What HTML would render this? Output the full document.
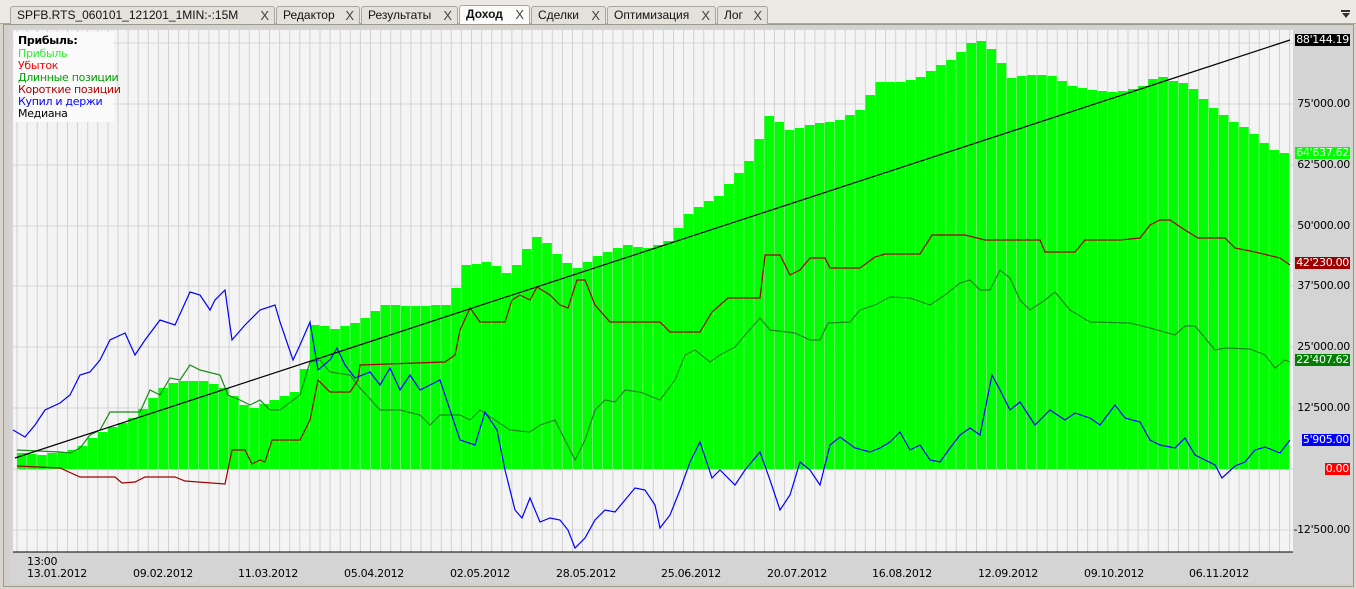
<!DOCTYPE html>
<html><head><meta charset="utf-8"><style>
*{margin:0;padding:0;box-sizing:border-box}
body{width:1356px;height:589px;overflow:hidden;background:#d8d5cf;font-family:"Liberation Sans","DejaVu Sans",sans-serif;position:relative}
.tabs{position:absolute;left:0;top:0;width:1356px;height:24px;background:#ece9e4;border-bottom:1px solid #a9a69f}
.tab{position:absolute;top:6px;height:18px;border:1px solid #a9a69f;border-bottom:none;background:#e4e1db;font-size:12px;line-height:17px;padding-left:6px;color:#111;border-radius:3px 3px 0 0}
.tab b{font-weight:bold}
.tab .x{position:absolute;right:5px;top:0;color:#444;font-size:13px}
.pane{position:absolute;left:3px;top:24px;width:1351px;height:563px;border:1px solid #9c998f;background:#d4d1ca}
svg{position:absolute;left:0;top:0}
.lbl{position:absolute;font-size:11px;font-family:"DejaVu Sans","Liberation Sans",sans-serif;letter-spacing:-0.3px;line-height:12px}
</style></head><body>
<div class="tabs">
<div class="tab" style="left:10px;width:265px">SPFB.RTS_060101_121201_1MIN:-:15M<span class="x">X</span></div>
<div class="tab" style="left:276px;width:84px">Редактор<span class="x">X</span></div>
<div class="tab" style="left:361px;width:97px">Результаты<span class="x">X</span></div>
<div class="tab" style="left:459px;width:71px;background:#fbfbfa;top:5px;height:20px"><b>Доход</b><span class="x">X</span></div>
<div class="tab" style="left:531px;width:75px">Сделки<span class="x">X</span></div>
<div class="tab" style="left:607px;width:109px">Оптимизация<span class="x">X</span></div>
<div class="tab" style="left:717px;width:51px">Лог<span class="x">X</span></div>
<div style="position:absolute;right:6px;top:10px;width:9px;height:2px;background:#333"></div>
<div style="position:absolute;right:6px;top:13px;width:0;height:0;border-left:4.5px solid transparent;border-right:4.5px solid transparent;border-top:5px solid #333"></div>
</div>
<div class="pane"></div>
<svg id="s" width="1356" height="589"></svg>
<div style="position:absolute;left:14px;top:32px;width:100px;height:90px;background:#fafafa"></div>
<div class="lbl" style="left:18px;top:35px;font-weight:bold">Прибыль:</div>
<div class="lbl" style="left:18px;top:48px;color:#33ee33">Прибыль</div>
<div class="lbl" style="left:18px;top:60px;color:#ff0000">Убыток</div>
<div class="lbl" style="left:18px;top:72px;color:#00a000">Длинные позиции</div>
<div class="lbl" style="left:18px;top:84px;color:#b00000">Короткие позиции</div>
<div class="lbl" style="left:18px;top:96px;color:#0000ff">Купил и держи</div>
<div class="lbl" style="left:18px;top:108px;color:#000">Медиана</div>
<div id="ax"></div>
<script>
const s=document.getElementById('s');
let h='';
h+='<rect x="10" y="28" width="1342" height="555" fill="#d4d4d4"/>';
h+='<rect x="13" y="30" width="1280" height="522" fill="#f4f4f4"/>';
for(let x=17;x<1293;x+=10.1){h+=`<line x1="${x.toFixed(1)}" y1="30" x2="${x.toFixed(1)}" y2="552" stroke="#d0d0d0"/>`;}
const hl=[43,104,165,226,286,347,408,469,530];
hl.forEach(y=>h+=`<line x1="13" y1="${y}" x2="1293" y2="${y}" stroke="#d6d6d6"/>`);
const tops=[[17,452],[40,455],[60,452],[80,448],[95,436],[110,428],[130,420],[145,408],[160,390],[175,382],[200,380],[225,388],[250,410],[275,400],[300,390],[316,320],[330,330],[360,322],[385,305],[420,306],[450,305],[465,265],[490,262],[510,275],[530,245],[540,234],[555,252],[575,270],[600,255],[625,245],[650,248],[670,240],[690,212],[720,195],[750,160],[770,115],[790,130],[810,125],[840,120],[860,110],[880,82],[900,82],[920,78],[935,68],[960,55],[965,44],[985,40],[1000,60],[1010,78],[1030,75],[1050,75],[1070,85],[1090,90],[1120,92],[1140,88],[1160,75],[1170,80],[1190,85],[1210,105],[1230,120],[1250,130],[1270,148],[1290,155]];
function interp(x){for(let i=0;i<tops.length-1;i++){if(x<=tops[i+1][0]){const a=tops[i],b=tops[i+1];return a[1]+(b[1]-a[1])*(x-a[0])/(b[0]-a[0]);}}return tops[tops.length-1][1];}
for(let x=17;x<1281;x+=10.1){const t=Math.round(interp(x+5));h+=`<rect x="${x.toFixed(1)}" y="${t}" width="9.6" height="${469-t}" fill="#00ff00"/>`;}
function pl(p,c){return `<polyline fill="none" stroke="${c}" stroke-width="1.2" points="${p.map(a=>a.join(',')).join(' ')}"/>`;}
const blue=[[13,430],[25,437],[35,425],[45,410],[60,403],[70,395],[80,375],[90,372],[100,360],[110,340],[125,333],[135,355],[145,340],[160,320],[175,325],[190,292],[200,295],[210,310],[215,300],[225,290],[232,340],[245,325],[260,310],[275,305],[280,322],[293,360],[300,345],[310,322],[318,370],[330,360],[337,348],[345,365],[355,378],[370,372],[380,385],[390,368],[400,390],[410,375],[420,390],[440,380],[450,410],[460,440],[475,445],[485,412],[497,430],[505,470],[515,510],[522,518],[530,498],[540,522],[550,518],[560,520],[568,530],[575,548],[585,538],[595,520],[605,510],[615,512],[625,500],[635,488],[645,490],[655,505],[660,528],[670,515],[680,490],[690,462],[700,442],[712,478],[720,470],[735,485],[745,470],[760,452],[770,480],[780,510],[790,495],[800,462],[810,470],[820,485],[830,445],[840,437],[855,448],[870,452],[880,448],[890,442],[900,432],[910,450],[920,445],[930,460],[940,462],[950,448],[960,435],[970,428],[980,435],[992,375],[1000,390],[1010,410],[1020,402],[1035,425],[1050,410],[1065,420],[1075,413],[1090,418],[1100,425],[1115,405],[1125,418],[1140,422],[1150,440],[1160,445],[1175,448],[1185,438],[1195,455],[1205,460],[1215,465],[1222,478],[1235,466],[1245,462],[1255,450],[1265,447],[1280,453],[1290,440]];
const red=[[17,466],[60,468],[80,477],[115,477],[122,483],[135,482],[145,477],[175,477],[185,481],[225,484],[232,450],[245,450],[252,464],[260,460],[265,462],[272,440],[300,440],[310,420],[318,380],[330,392],[350,392],[358,380],[360,365],[445,362],[455,355],[460,330],[470,308],[480,322],[505,322],[512,300],[520,295],[530,300],[537,287],[550,295],[560,305],[568,308],[577,280],[585,280],[595,305],[610,322],[660,322],[670,332],[700,332],[712,312],[720,305],[728,298],[760,298],[765,255],[780,255],[790,275],[800,270],[810,258],[825,258],[830,268],[860,268],[875,257],[885,254],[920,254],[932,235],[965,235],[985,240],[1040,240],[1045,252],[1075,252],[1085,240],[1120,240],[1140,238],[1150,225],[1160,220],[1170,220],[1185,230],[1198,238],[1225,238],[1235,248],[1255,252],[1280,258],[1290,265]];
const grn=[[17,450],[60,452],[70,453],[80,448],[90,435],[100,430],[110,412],[125,412],[140,412],[150,390],[160,395],[170,378],[180,380],[190,365],[200,370],[220,375],[228,395],[240,400],[250,405],[260,400],[270,410],[280,410],[300,395],[310,362],[320,360],[330,372],[350,375],[360,388],[380,410],[400,410],[420,415],[430,425],[440,415],[460,415],[470,420],[480,410],[495,420],[510,430],[530,432],[540,425],[555,420],[565,440],[575,460],[585,440],[595,410],[605,400],[615,402],[625,390],[640,392],[660,400],[675,380],[685,355],[695,350],[710,362],[720,355],[735,347],[745,335],[760,318],[770,330],[795,333],[810,340],[820,340],[828,323],[850,322],[860,310],[875,305],[890,297],[910,298],[930,305],[945,295],[960,283],[970,280],[980,290],[990,290],[1000,270],[1010,278],[1020,300],[1030,310],[1045,300],[1055,292],[1070,310],[1090,322],[1130,323],[1150,328],[1175,335],[1185,326],[1195,326],[1205,338],[1215,350],[1225,348],[1250,349],[1265,355],[1275,368],[1285,360],[1290,362]];
h+=pl(grn,"#1a8a1a")+pl(red,"#a00000")+pl(blue,"#0000ff");
h+='<line x1="15" y1="458" x2="1290" y2="40" stroke="#000" stroke-width="1.2"/>';
h+='<line x1="13" y1="552" x2="1293" y2="552" stroke="#000"/>';
s.innerHTML=h;
let a='';
const L=[[40,"88'144.19","#000","#fff"],[104,"75'000.00"],[153,"64'637.62","#00ff00","#fff"],[165,"62'500.00"],[226,"50'000.00"],[263,"42'230.00","#a00000","#fff"],[286,"37'500.00"],[347,"25'000.00"],[360,"22'407.62","#008000","#fff"],[408,"12'500.00"],[440,"5'905.00","#0000ff","#fff"],[469,"0.00","#ff0000","#fff"],[530,"-12'500.00"]];
L.forEach(l=>{a+=`<div class="lbl" style="right:6px;top:${l[0]-6}px;${l[2]?'background:'+l[2]+';color:'+l[3]+';padding:0 1px':'color:#000'}">${l[1]}</div>`;});
a+='<div class="lbl" style="left:27px;top:556px">13:00</div>';
const D=[[27,"13.01.2012"],[133,"09.02.2012"],[238,"11.03.2012"],[344,"05.04.2012"],[450,"02.05.2012"],[556,"28.05.2012"],[661,"25.06.2012"],[767,"20.07.2012"],[872,"16.08.2012"],[978,"12.09.2012"],[1084,"09.10.2012"],[1189,"06.11.2012"]];
D.forEach(d=>a+=`<div class="lbl" style="left:${d[0]}px;top:568px">${d[1]}</div>`);
document.getElementById('ax').innerHTML=a;
</script>
</body></html>
